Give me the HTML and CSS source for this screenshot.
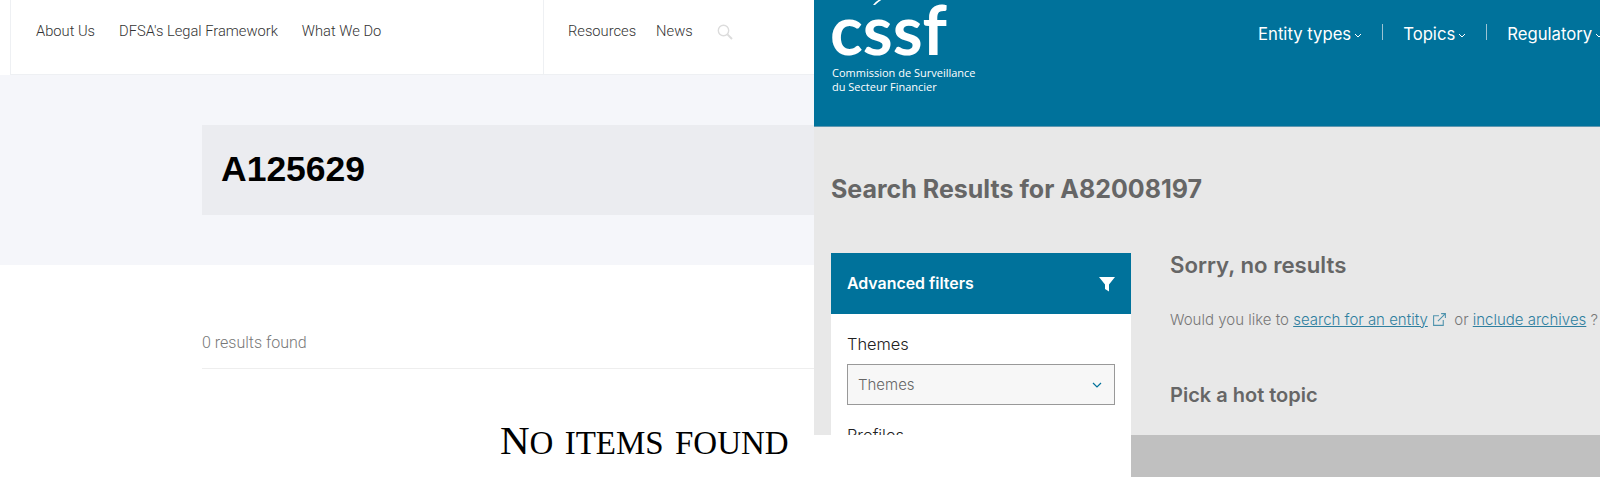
FILE: index.html
```html
<!DOCTYPE html>
<html lang="en">
<head>
    <meta charset="UTF-8">
    <meta name="viewport" content="width=device-width, initial-scale=1.0">
    <title>Search results</title>
    <link rel="stylesheet" href="styles.css">
</head>
<body>
    <div class="dfsa">
        <nav class="dfsa-nav">
            <div class="dfsa-nav-main">
                <a>About Us</a>
                <a>DFSA's Legal Framework</a>
                <a>What We Do</a>
            </div>
            <div class="dfsa-nav-side">
                <a>Resources</a>
                <a>News</a>
                <svg class="dfsa-search" viewBox="0 0 16 16" width="16" height="16">
                    <circle cx="6.5" cy="6.5" r="5.2" fill="none" stroke="#dcdcdc" stroke-width="1.4"/>
                    <path d="M10.4 10.4 L15 15" stroke="#dcdcdc" stroke-width="2"/>
                </svg>
            </div>
        </nav>
        <div class="dfsa-band">
            <h1 class="dfsa-title">A125629</h1>
        </div>
        <div class="dfsa-count">0 results found</div>
        <div class="dfsa-empty">No items found</div>
    </div>

    <div class="cssf">
        <header class="cssf-head">
            <div class="cssf-logo">
                <svg class="cssf-swoosh" viewBox="0 0 16 8" width="16" height="8">
                    <path d="M1 8 Q5 2 15 0 Q8 3 3 8 Z" fill="#fff"/>
                </svg>
                <div class="cssf-mark">cssf</div>
                <div class="cssf-name">Commission de Surveillance<br>du Secteur Financier</div>
            </div>
            <nav class="cssf-nav">
                <a>Entity types<svg class="chev" viewBox="0 0 8 5" width="8" height="5"><path d="M1 1 L4 4 L7 1" fill="none" stroke="#fff"/></svg></a>
                <a>Topics<svg class="chev" viewBox="0 0 8 5" width="8" height="5"><path d="M1 1 L4 4 L7 1" fill="none" stroke="#fff"/></svg></a>
                <a>Regulatory<svg class="chev" viewBox="0 0 8 5" width="8" height="5"><path d="M1 1 L4 4 L7 1" fill="none" stroke="#fff"/></svg></a>
            </nav>
        </header>
        <main class="cssf-main">
            <h2 class="cssf-heading">Search Results for A82008197</h2>
            <div class="cssf-cols">
                <aside class="filters">
                    <div class="filters-head">
                        <span>Advanced filters</span>
                        <svg viewBox="0 0 16 16" width="16" height="16"><path d="M0 1 H16 L10 8.5 V15.5 L6 13 V8.5 Z" fill="#fff"/></svg>
                    </div>
                    <div class="filters-body">
                        <label class="filter-label">Themes</label>
                        <div class="filter-select">
                            <span>Themes</span>
                            <svg viewBox="0 0 10 6" width="10" height="6"><path d="M1 1 L5 5 L9 1" fill="none" stroke="#00729b" stroke-width="1.2"/></svg>
                        </div>
                        <label class="filter-label">Profiles</label>
                    </div>
                </aside>
                <section class="results">
                    <h3 class="results-title">Sorry, no results</h3>
                    <p class="results-text">Would you like to <a>search for an entity</a>
                        <svg class="ext" viewBox="0 0 14 14" width="15" height="15"><path d="M10.5 7.5 V12.5 H1.5 V3.5 H6.5 M5.5 8.5 L12.5 1.5 M8.5 1.5 H12.5 V5.5" fill="none" stroke="#4f93ad"/></svg>
                        or <a>include archives</a> ?</p>
                    <h3 class="results-hot">Pick a hot topic</h3>
                </section>
            </div>
        </main>
        <div class="cssf-foot">
            <div class="cssf-foot-blank"></div>
            <div class="cssf-foot-grey"></div>
        </div>
    </div>
</body>
</html>
```
FILE: styles.css
```css
* {
    box-sizing: border-box;
}

html, body {
    margin: 0;
    height: 477px;
    overflow: hidden;
}

body {
    display: flex;
    background: #fff;
}

h1, h2, h3, p {
    margin: 0;
}

/* left capture */
.dfsa {
    width: 814px;
    flex: none;
    font-family: Roboto, "Liberation Sans", sans-serif;
}

.dfsa-nav {
    height: 75px;
    display: flex;
    border-bottom: 1px solid #eef0f3;
    margin-left: 10px;
    border-left: 1px solid #eef0f3;
    font-size: 14.7px;
    font-weight: 300;
    color: #333;
}

.dfsa-nav-main {
    width: 533px;
    display: flex;
    gap: 24px;
    padding: 22px 0 0 25px;
    border-right: 1px solid #eef0f3;
}

.dfsa-nav-side {
    display: flex;
    gap: 20px;
    padding: 22px 0 0 24px;
}

.dfsa-search {
    margin: 2px 0 0 4px;
}

.dfsa-band {
    height: 190px;
    padding: 50px 0 0 202px;
    background: #f5f6fa;
}

.dfsa-title {
    height: 90px;
    padding-left: 19px;
    background: #ebecf0;
    font-family: "Liberation Sans", Arial, sans-serif;
    font-size: 35.5px;
    font-weight: 700;
    line-height: 88px;
    color: #000;
}

.dfsa-count {
    margin-left: 202px;
    padding: 68px 0 15px;
    border-bottom: 1px solid #eeeeee;
    font-size: 16px;
    font-weight: 300;
    line-height: 20px;
    color: #777;
}

.dfsa-empty {
    margin-top: 49px;
    padding-left: 500px;
    font-family: "Liberation Serif", serif;
    font-size: 33px;
    text-transform: uppercase;
    line-height: 44px;
    word-spacing: 3px;
    white-space: nowrap;
    color: #000;
}

.dfsa-empty::first-letter {
    font-size: 41px;
}

/* right capture */
.cssf {
    width: 786px;
    flex: none;
    overflow: hidden;
    font-family: Inter, sans-serif;
}

.cssf-head {
    height: 127px;
    display: flex;
    background: #00729b;
    color: #fff;
    border-bottom: 1px solid #5e97b0;
}

.cssf-logo {
    position: relative;
    width: 444px;
    flex: none;
    padding: 0 0 0 16px;
}

.cssf-swoosh {
    position: absolute;
    left: 58px;
    top: -3px;
}

.cssf-mark {
    font-family: Lato, sans-serif;
    font-size: 68px;
    font-weight: 700;
    line-height: 58px;
}

.cssf-name {
    margin-top: 8px;
    padding-left: 2px;
    font-family: "Open Sans", sans-serif;
    font-size: 11px;
    line-height: 14px;
    white-space: nowrap;
}

.cssf-nav {
    display: flex;
    padding-top: 24px;
    font-size: 16.7px;
    line-height: 20px;
    white-space: nowrap;
}

.cssf-nav a {
    height: 16px;
    padding-right: 20px;
    margin-right: 20px;
    border-right: 1px solid #9cc3d3;
}

.cssf-nav a:last-child {
    border-right: 0;
}

.chev {
    margin-left: 3px;
    vertical-align: 2px;
}

.cssf-main {
    height: 308px;
    padding: 0 0 0 17px;
    overflow: hidden;
    background: #e8e8e8;
}

.cssf-heading {
    padding-top: 46px;
    font-size: 25px;
    font-weight: 700;
    line-height: 32px;
    color: #666;
}

.cssf-cols {
    display: flex;
    margin-top: 48px;
}

.filters {
    width: 300px;
    flex: none;
    background: #fff;
}

.filters-head {
    height: 61px;
    display: flex;
    align-items: center;
    justify-content: space-between;
    padding: 0 16px;
    background: #00729b;
    color: #fff;
    font-size: 15.9px;
    font-weight: 600;
}

.filters-body {
    padding: 19px 16px 0;
}

.filter-label {
    display: block;
    font-size: 16.4px;
    font-weight: 300;
    line-height: 22px;
    color: #222;
}

.filter-select {
    height: 41px;
    display: flex;
    align-items: center;
    justify-content: space-between;
    margin: 9px 0 19px;
    padding: 0 12px 0 10px;
    background: #f7f7f7;
    border: 1px solid #999;
    font-size: 15px;
    font-weight: 300;
    color: #666;
}

.results {
    padding-left: 39px;
    color: #666;
    white-space: nowrap;
}

.results-title {
    font-size: 22.2px;
    font-weight: 600;
    line-height: 24px;
}

.results-text {
    margin-top: 33px;
    font-size: 15px;
    font-weight: 300;
    line-height: 20px;
    color: #777;
}

.results-text a {
    color: #2f7f9f;
    text-decoration: underline;
}

.ext {
    vertical-align: -2px;
    margin-right: 3px;
}

.results-hot {
    margin-top: 53px;
    font-size: 20px;
    font-weight: 600;
    line-height: 24px;
}

.cssf-foot {
    height: 42px;
    display: flex;
}

.cssf-foot-blank {
    width: 317px;
    flex: none;
    background: #fff;
}

.cssf-foot-grey {
    flex: 1;
    background: #c0c0c0;
}
```
